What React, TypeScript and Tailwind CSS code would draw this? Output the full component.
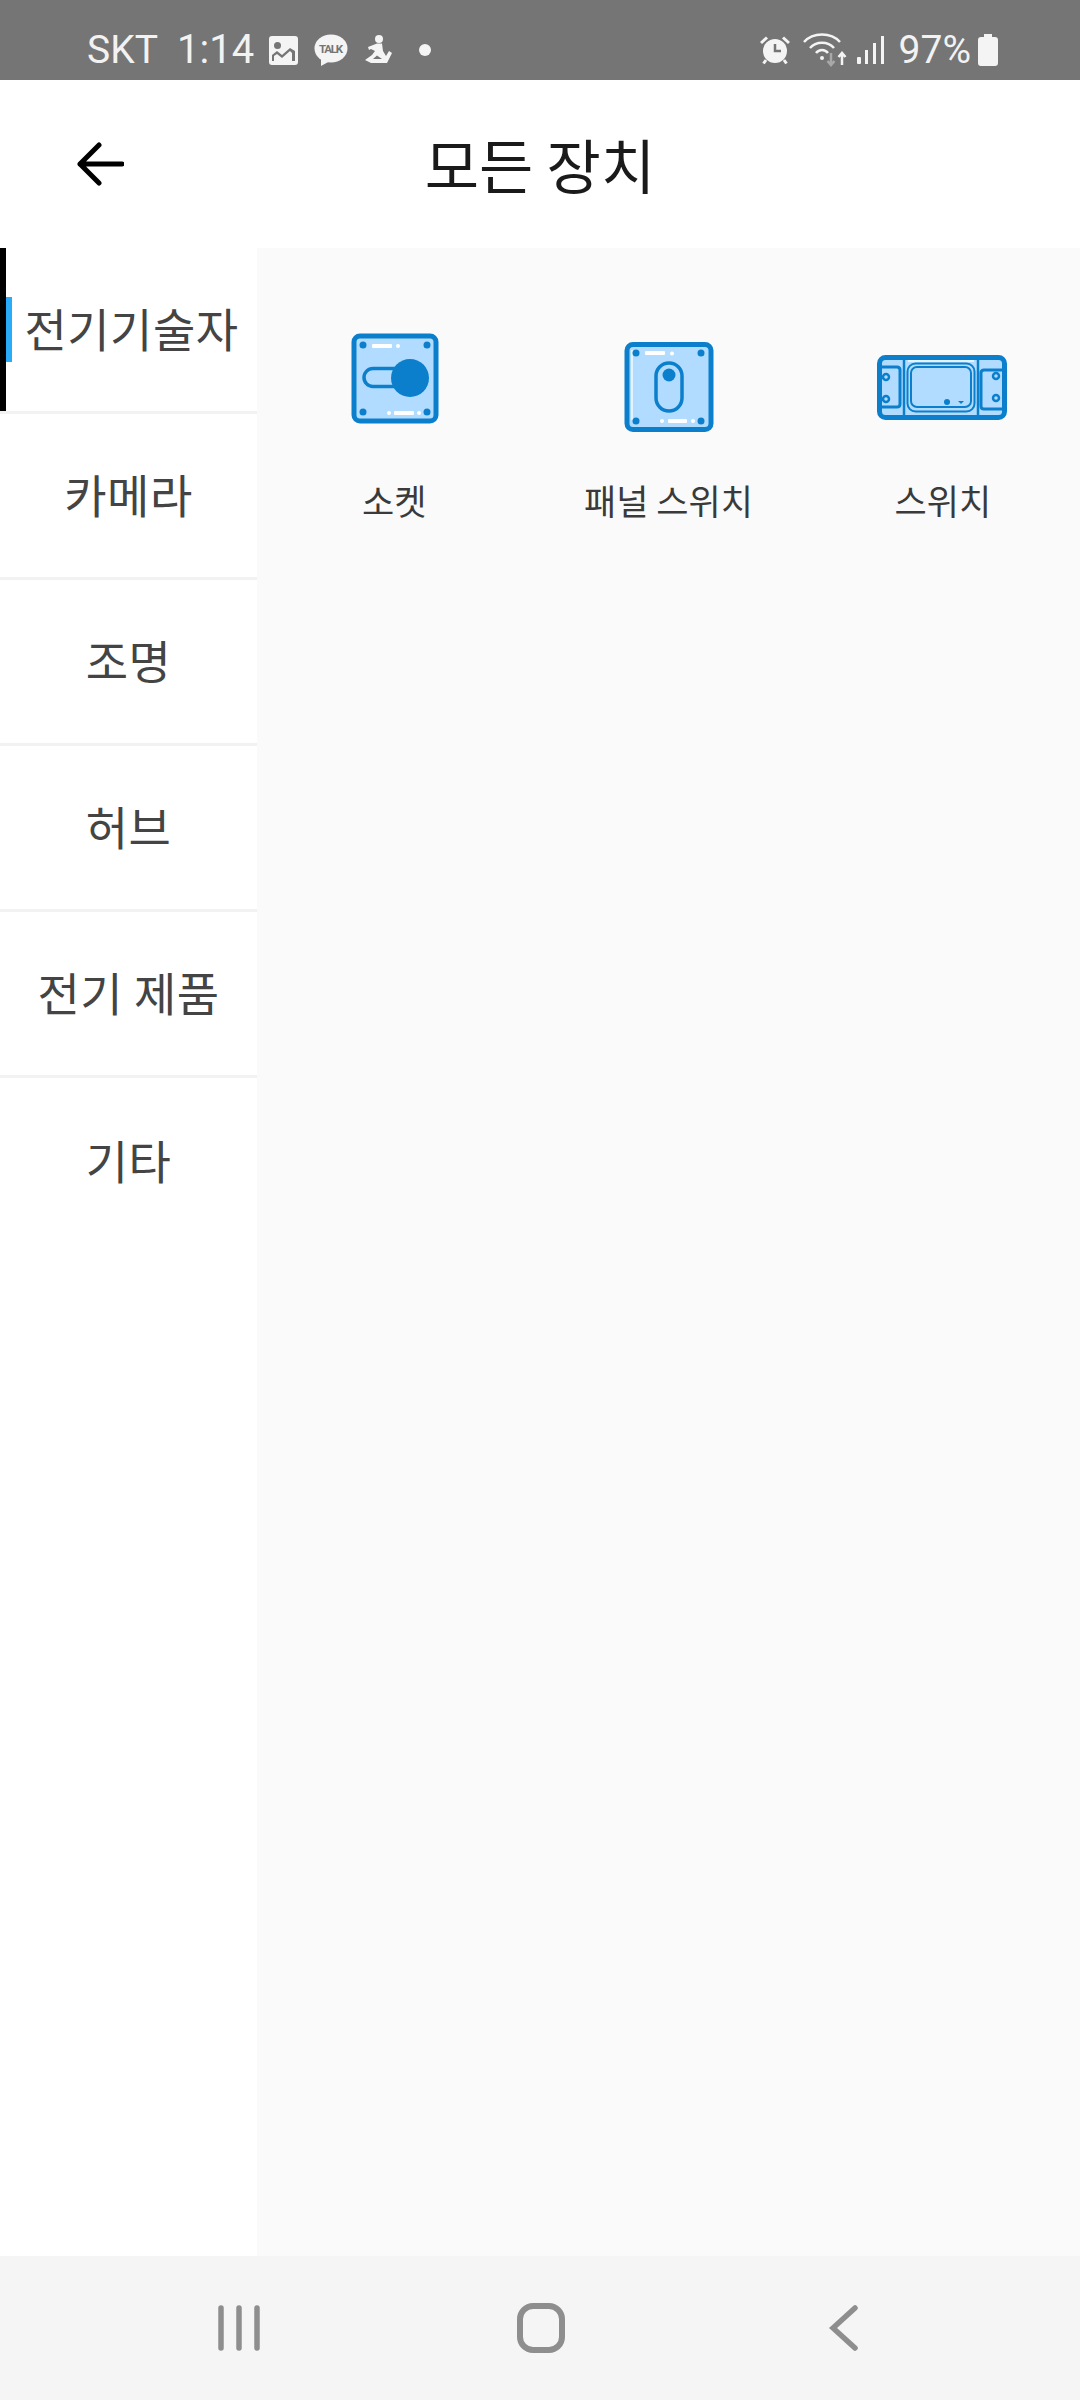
const STROKE = '#0b7fcc'
const FILL = '#b2dcff'

const categories = ['전기기술자', '카메라', '조명', '허브', '전기 제품', '기타']

function SocketIcon() {
  return (
    <svg viewBox="324 318 140 140" className="w-[140px] h-[140px]">
      <rect x="354" y="336" width="82" height="85" rx="6" fill={FILL} stroke={STROKE} strokeWidth="5" />
      <circle cx="363" cy="345" r="3.5" fill={STROKE} />
      <circle cx="427" cy="345" r="3.5" fill={STROKE} />
      <circle cx="363" cy="412" r="3.5" fill={STROKE} />
      <circle cx="427" cy="412" r="3.5" fill={STROKE} />
      <rect x="372" y="344" width="20" height="4" rx="1" fill="#fff" />
      <circle cx="398" cy="346" r="2" fill="#fff" />
      <rect x="394" y="411" width="20" height="4" rx="1" fill="#fff" />
      <circle cx="389" cy="413" r="2" fill="#fff" />
      <circle cx="419" cy="413" r="2" fill="#fff" />
      <rect x="364" y="368.5" width="44" height="18" rx="9" fill={FILL} stroke={STROKE} strokeWidth="3.5" />
      <circle cx="410" cy="378" r="19" fill={STROKE} />
    </svg>
  )
}

function PanelIcon() {
  return (
    <svg viewBox="599 318 140 140" className="w-[140px] h-[140px]">
      <rect x="628" y="344.5" width="84" height="85" rx="6" fill={FILL} stroke={STROKE} strokeWidth="5" />
      <path d="M633 350V420" stroke="#e3f3ff" strokeWidth="2" />
      <circle cx="637" cy="353" r="3.5" fill={STROKE} />
      <circle cx="702" cy="353" r="3.5" fill={STROKE} />
      <circle cx="637" cy="421" r="3.5" fill={STROKE} />
      <circle cx="702" cy="421" r="3.5" fill={STROKE} />
      <rect x="646" y="351" width="20" height="4" rx="1" fill="#fff" />
      <circle cx="673" cy="353.5" r="2" fill="#fff" />
      <rect x="669" y="419" width="19" height="4" rx="1" fill="#fff" />
      <circle cx="663" cy="421" r="2" fill="#fff" />
      <circle cx="694" cy="421" r="2" fill="#fff" />
      <rect x="657" y="363" width="26" height="48" rx="13" fill={FILL} stroke={STROKE} strokeWidth="3.5" />
      <circle cx="670" cy="375" r="6.5" fill={STROKE} />
    </svg>
  )
}

function SwitchIcon() {
  return (
    <svg viewBox="873 318 140 140" className="w-[140px] h-[140px]">
      <rect x="879.5" y="357.5" width="125" height="60" rx="6" fill={FILL} stroke={STROKE} strokeWidth="5" />
      <path d="M904 357V418M978 357V418" stroke={STROKE} strokeWidth="2.5" />
      <path d="M908 361H974" stroke="#e3f3ff" strokeWidth="2" />
      <rect x="907.5" y="363.5" width="67" height="48" rx="8" fill="none" stroke={STROKE} strokeWidth="2" />
      <rect x="911" y="367" width="60" height="40" rx="6" fill={FILL} stroke={STROKE} strokeWidth="2" />
      <path d="M880 367H897Q900 367 900 370V404Q900 407 897 407H880" fill="none" stroke={STROKE} strokeWidth="3" />
      <path d="M1004 370H984Q981 370 981 373V406Q981 409 984 409H1004" fill="none" stroke={STROKE} strokeWidth="3" />
      <circle cx="886" cy="377" r="3" fill={FILL} stroke={STROKE} strokeWidth="2.5" />
      <circle cx="886" cy="399" r="3" fill={FILL} stroke={STROKE} strokeWidth="2.5" />
      <circle cx="996" cy="376" r="3" fill={FILL} stroke={STROKE} strokeWidth="2.5" />
      <circle cx="996" cy="398" r="3" fill={FILL} stroke={STROKE} strokeWidth="2.5" />
      <circle cx="947" cy="402" r="3" fill={STROKE} />
      <path d="M958 401H964L961 404Z" fill={STROKE} />
    </svg>
  )
}

function StatusBar() {
  return (
    <div className="h-[80px] bg-[#757575] flex items-center justify-between pt-[20px] pl-[87px] pr-[82px] text-[#f2f2f2] font-['Roboto',sans-serif] text-[39px] leading-none">
      <div className="flex items-center">
        <span className="w-[71px] whitespace-nowrap">SKT</span>
        <span className="ml-[19px] w-[75px] text-[40px]">1:14</span>
        {/* gallery */}
        <svg viewBox="0 0 29 29" className="w-[29px] h-[29px] ml-[17px]">
          <rect width="29" height="29" rx="3" fill="#f4f4f4" />
          <circle cx="8.5" cy="9.5" r="3.5" fill="#757575" />
          <path d="M3 25V19L8 15L13 19L21 12L26 15V25H23V17L21 15L13 22L8 18L5 20V25Z" fill="#757575" />
        </svg>
        {/* kakao talk */}
        <svg viewBox="0 0 34 33" className="w-[34px] h-[33px] ml-[16px]">
          <ellipse cx="17" cy="14.5" rx="16.5" ry="14" fill="#f4f4f4" />
          <path d="M7 24L7 32L16 27Z" fill="#f4f4f4" />
          <text x="17" y="19" textAnchor="middle" fontSize="11.5" fontWeight="700" fontFamily="Roboto, sans-serif" fill="#757575" textLength="24">TALK</text>
        </svg>
        {/* samsung health */}
        <svg viewBox="0 0 28 30" className="w-[28px] h-[30px] ml-[16px]">
          <circle cx="15" cy="4" r="4" fill="#f4f4f4" />
          <path d="M4 12L13 8.5H18L19 16L22 21L25 16L28 18L23 28H7L1 25L8 20L11 16L7 14L5 15Z" fill="#f4f4f4" />
          <path d="M9 24H18L13 20.5Z" fill="#757575" />
        </svg>
        <span className="w-[12px] h-[12px] rounded-full bg-[#f4f4f4] ml-[27px]" />
      </div>
      <div className="flex items-center">
        {/* alarm */}
        <svg viewBox="0 0 30 30" className="w-[30px] h-[30px]">
          <circle cx="15" cy="16" r="12" fill="#f4f4f4" />
          <path d="M1 8L7 2.5M29 8L23 2.5M6 25L3.5 28.5M24 25L26.5 28.5" stroke="#f4f4f4" strokeWidth="3" fill="none" />
          <path d="M15 9V16H21" stroke="#757575" strokeWidth="2.5" fill="none" />
        </svg>
        {/* wifi with arrows */}
        <svg viewBox="0 0 46 34" className="w-[46px] h-[34px] ml-[13px]">
          <path d="M1 9C10 -1 28 -1 37 9" stroke="#f4f4f4" strokeWidth="2.5" fill="none" />
          <path d="M7 15C13 8 25 8 31 15" stroke="#f4f4f4" strokeWidth="2.5" fill="none" />
          <path d="M13 20C16 16 22 16 25 20" stroke="#f4f4f4" strokeWidth="2.5" fill="none" />
          <circle cx="19" cy="25" r="2" fill="#f4f4f4" />
          <path d="M28 20V32M24.5 28L28 32L31.5 28" stroke="#a8a8a8" strokeWidth="2.5" fill="none" />
          <path d="M39 32V20M35.5 24L39 20L42.5 24" stroke="#f4f4f4" strokeWidth="2.5" fill="none" />
        </svg>
        {/* signal */}
        <svg viewBox="0 0 28 30" className="w-[28px] h-[30px] ml-[8px]">
          <rect x="0" y="22" width="4" height="7" rx="1" fill="#f4f4f4" />
          <rect x="8" y="15" width="3" height="14" fill="#f4f4f4" />
          <rect x="16" y="8" width="3" height="21" fill="#f4f4f4" />
          <rect x="24" y="1" width="3" height="28" fill="#f4f4f4" />
        </svg>
        <span className="ml-[14px]">97%</span>
        {/* battery */}
        <svg viewBox="0 0 20 32" className="w-[20px] h-[32px] ml-[7px]">
          <path d="M6 0H14V3H17Q20 3 20 6V29Q20 32 17 32H3Q0 32 0 29V6Q0 3 3 3H6Z" fill="#f4f4f4" />
        </svg>
      </div>
    </div>
  )
}

function Header() {
  return (
    <div className="h-[168px] bg-white flex items-center">
      <div className="w-[200px] pl-[77px]">
        <svg viewBox="0 0 47 44" className="w-[47px] h-[44px]" fill="none" stroke="#000" strokeWidth="5" strokeLinecap="round" strokeLinejoin="round">
          <path d="M45 22H3M22 3L3 22L22 41" />
        </svg>
      </div>
      <h1 className="flex-1 pb-[2px] text-center text-[59px] leading-none font-normal text-[#1a1a1a]">모든 장치</h1>
      <div className="w-[200px]" />
    </div>
  )
}

function Sidebar() {
  return (
    <div className="w-[257px] bg-white">
      {categories.map((name, i) => (
        <div key={name} className={i < categories.length - 1 ? 'h-[166px] border-b-[3px] border-[#f2f2f2]' : 'h-[166px]'}>
          <div
            className={
              i === 0
                ? 'relative h-full pb-[4px] flex items-center justify-center border-l-[6px] border-black text-[#444444] text-[46px] tracking-[0.5px] whitespace-nowrap'
                : 'h-full pb-[4px] flex items-center justify-center text-[#444444] text-[46px] tracking-[0.5px] whitespace-nowrap'
            }
          >
            {i === 0 && <span className="absolute left-0 top-[49px] w-[6px] h-[65px] bg-[#29abf8]" />}
            {name}
          </div>
        </div>
      ))}
    </div>
  )
}

function Device({ icon, label }: { icon: React.ReactNode; label: string }) {
  return (
    <div className="flex flex-col items-center">
      {icon}
      <span className="mt-[17px] text-[35px] leading-[50px] text-[#3a3a3a] whitespace-nowrap">{label}</span>
    </div>
  )
}

function NavBar() {
  return (
    <div className="h-[144px] bg-[#f5f5f5] flex items-center pl-[217px]">
      <svg viewBox="0 0 44 46" className="w-[44px] h-[46px]" fill="none" stroke="#8e8e8e" strokeWidth="5.5" strokeLinecap="round">
        <path d="M4 3V43M22 3V43M40 3V43" />
      </svg>
      <svg viewBox="0 0 48 50" className="w-[48px] h-[50px] ml-[256px]" fill="none" stroke="#8e8e8e" strokeWidth="6">
        <rect x="3" y="3" width="42" height="44" rx="13" />
      </svg>
      <svg viewBox="0 0 30 46" className="w-[30px] h-[46px] ml-[264px]" fill="none" stroke="#8e8e8e" strokeWidth="5.5" strokeLinecap="round">
        <path d="M26 3L4 23L26 43" />
      </svg>
    </div>
  )
}

export default function App() {
  return (
    <div className="w-[1080px] h-[2400px] flex flex-col font-['Noto_Sans_CJK_KR','Noto_Sans',sans-serif] overflow-hidden">
      <StatusBar />
      <Header />
      <div className="flex-1 flex min-h-0">
        <Sidebar />
        <div className="flex-1 bg-[#fafafa] pt-[70px]">
          <div className="grid grid-cols-3">
            <Device icon={<SocketIcon />} label="소켓" />
            <Device icon={<PanelIcon />} label="패널 스위치" />
            <Device icon={<SwitchIcon />} label="스위치" />
          </div>
        </div>
      </div>
      <NavBar />
    </div>
  )
}
